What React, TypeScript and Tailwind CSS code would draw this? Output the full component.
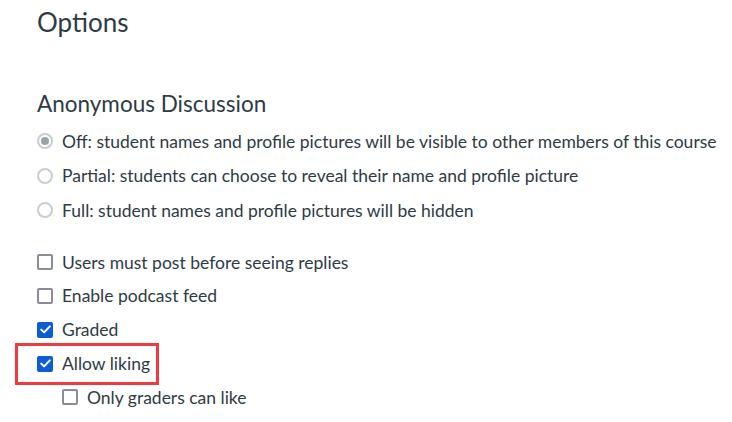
const radios = [
  { label: "Off: student names and profile pictures will be visible to other members of this course", checked: true },
  { label: "Partial: students can choose to reveal their name and profile picture", checked: false },
  { label: "Full: student names and profile pictures will be hidden", checked: false },
];

function Radio({ checked }: { checked: boolean }) {
  return (
    <span className="flex justify-center items-center border-2 border-[#c7cdd1] rounded-full w-4 h-4 shrink-0 bg-white">
      {checked && <span className="bg-[#9aa3a8] rounded-full w-2 h-2" />}
    </span>
  );
}

function Checkbox({ checked }: { checked: boolean }) {
  if (checked) {
    return (
      <span className="flex justify-center items-center bg-[#0b5cd5] rounded-[2px] w-4 h-4 shrink-0">
        <svg width="11" height="9" viewBox="0 0 11 9" fill="none">
          <path d="M1.2 4.6 L4.1 7.4 L9.8 1.4" stroke="white" strokeWidth="2" strokeLinecap="round" strokeLinejoin="round" />
        </svg>
      </span>
    );
  }
  return <span className="border-2 border-[#8b8b9b] rounded-[2px] w-4 h-4 shrink-0 bg-white" />;
}

function CheckRow({ label, checked }: { label: string; checked: boolean }) {
  return (
    <div className="flex items-center gap-[9px] h-[33.75px]">
      <Checkbox checked={checked} />
      <span>{label}</span>
    </div>
  );
}

export default function App() {
  return (
    <div className="bg-white w-[732px] h-[422px] overflow-hidden pl-[37px] pt-[3px] text-[#2d3b45] text-[17.5px] leading-none font-['Lato','Liberation_Sans',sans-serif]">
      <h1 className="flex items-center h-[38px] text-[26px]">Options</h1>

      <h2 className="flex items-center mt-[44px] h-[38px] text-[22.5px]">Anonymous Discussion</h2>

      <div className="flex flex-col mt-[1px]">
        {radios.map((r) => (
          <div key={r.label} className="flex items-center gap-[9px] h-[34.5px]">
            <Radio checked={r.checked} />
            <span>{r.label}</span>
          </div>
        ))}
      </div>

      <div className="flex flex-col mt-[18px]">
        <CheckRow label="Users must post before seeing replies" checked={false} />
        <CheckRow label="Enable podcast feed" checked={false} />
        <CheckRow label="Graded" checked={true} />
        <div className="relative">
          <CheckRow label="Allow liking" checked={true} />
          {/* annotation box */}
          <div className="absolute top-[-4px] left-[-22px] w-[144px] h-[42px] border-[3px] border-[#ef3a3f] pointer-events-none" />
        </div>
        <div className="pl-[25px]">
          <CheckRow label="Only graders can like" checked={false} />
        </div>
      </div>
    </div>
  );
}
